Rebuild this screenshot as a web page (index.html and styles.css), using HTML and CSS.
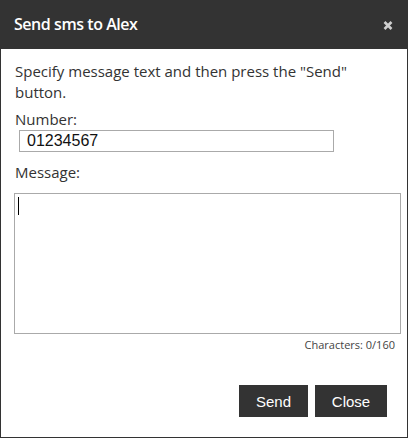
FILE: index.html
```html
<!DOCTYPE html>
<html>
<head>
<meta charset="utf-8">
<link rel="stylesheet" href="styles.css">
</head>
<body>
<div class="dialog">
  <div class="header">
    <span class="title">Send sms to Alex</span>
    <svg class="close" width="10" height="9" viewBox="0 0 10 9"><path d="M1.5 1 L8.5 8 M8.5 1 L1.5 8" stroke="#cfcfcf" stroke-width="2.6" stroke-linecap="butt"/></svg>
  </div>
  <div class="body">
    <p class="intro">Specify message text and then press the "Send" button.</p>
    <label class="label">Number:</label>
    <div class="input">01234567</div>
    <label class="label msg-label">Message:</label>
    <div class="textarea"><span class="caret"></span></div>
    <div class="counter">Characters: 0/160</div>
    <div class="actions">
      <button class="btn">Send</button>
      <button class="btn">Close</button>
    </div>
  </div>
</div>
</body>
</html>
```
FILE: styles.css
```css
html, body { margin: 0; padding: 0; background: #fff; }
.dialog {
  width: 408px;
  height: 438px;
  box-sizing: border-box;
  display: flex;
  flex-direction: column;
  font-family: "Open Sans", sans-serif;
}
.header {
  height: 49px;
  flex: none;
  background: #333;
  display: flex;
  align-items: center;
  justify-content: space-between;
  padding: 0 15px 0 14px;
  box-sizing: border-box;
}
.title {
  color: #fff;
  font-size: 16px;
  font-weight: 600;
  letter-spacing: -0.45px;
  line-height: 20px;
  margin-top: -1px;
}
.close {
  display: block;
  margin-top: 1px;
}
.body {
  flex: 1;
  border: 1px solid #333;
  border-top: none;
  padding: 0 6px 0 13px;
  display: flex;
  flex-direction: column;
  color: #333;
}
.intro {
  margin: 12px 0 0 1px;
  font-size: 15px;
  line-height: 21px;
  padding-right: 15px;
}
.label {
  font-size: 15px;
  line-height: 21px;
  margin: 6px 0 0 1px;
  display: block;
}
.msg-label { margin-top: 10px; }
.input {
  margin: 0 0 0 5px;
  width: 315px;
  height: 22px;
  box-sizing: border-box;
  border: 1px solid #aaa;
  font-family: "Liberation Sans", Arial, sans-serif;
  font-size: 16px;
  line-height: 20px;
  padding-left: 7px;
  color: #111;
}
.textarea {
  margin-top: 10px;
  width: 387px;
  height: 141px;
  box-sizing: border-box;
  border: 1px solid #aaa;
  padding: 3px 0 0 3px;
}
.caret {
  display: block;
  width: 1px;
  height: 18px;
  background: #000;
}
.counter {
  font-size: 11px;
  text-align: right;
  margin-top: 3px;
  padding-right: 6px;
  color: #444;
  line-height: 15px;
}
.actions {
  margin-top: 33px;
  display: flex;
  justify-content: flex-end;
  gap: 7px;
  padding-right: 14px;
}
.btn {
  background: #333;
  color: #fff;
  border: none;
  height: 32px;
  font-family: "Liberation Sans", Arial, sans-serif;
  font-size: 15px;
  padding: 0;
  margin: 0;
}
.btn:first-child { width: 69px; }
.btn:last-child { width: 72px; }
```
